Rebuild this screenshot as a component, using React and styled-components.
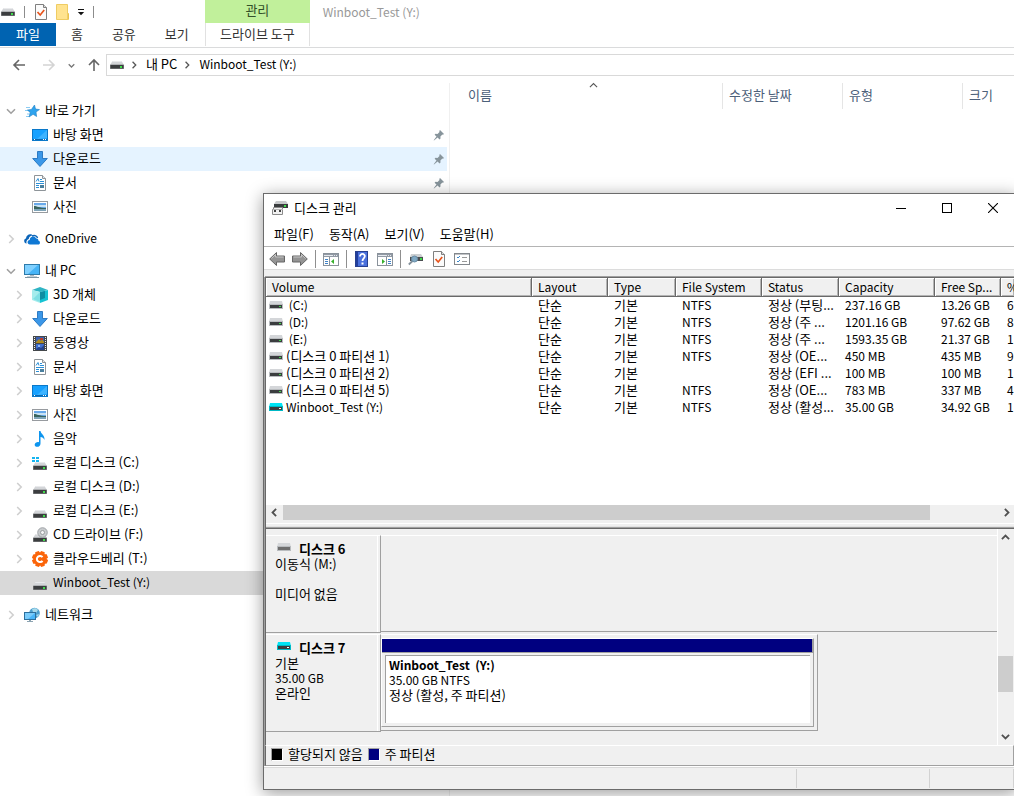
//Explorer window with the Disk Management window lying over it
import React from 'react'
import styled, { createGlobalStyle, css } from 'styled-components'

const GlobalStyle = createGlobalStyle`
  * {
    box-sizing: border-box;
  }
  body {
    margin: 0;
    background: #fff;
    color: #000;
    font-family: "Noto Sans CJK KR", "Noto Sans", sans-serif;
    font-size: 13px;
    line-height: 16px;
    overflow: hidden;
  }
  button {
    font: inherit;
    color: inherit;
    background: none;
    border: none;
    padding: 0;
    cursor: default;
  }
  a {
    color: inherit;
    text-decoration: none;
  }
  svg {
    display: block;
    flex: none;
  }
`

/* ---------- Icons ---------- */

const Icon = ({ w = 16, h = 16, children }) => (
  <svg width={w} height={h} viewBox={`0 0 ${w} ${h}`} aria-hidden="true">{children}</svg>
)

const DriveShape = () => (
  <>
    <path d="M3.5 7h9L15 11H1z" fill="#d3d5d8" />
    <path d="M3.5 7h9l.6 1H2.9z" fill="#e9eaec" />
    <rect x="1" y="10.5" width="14" height="4.5" rx=".6" fill="#8b8d8f" />
    <rect x="1.5" y="11" width="13" height="3.5" fill="#3b3d3f" />
    <rect x="11" y="12" width="2" height="2" fill="#3fdc4a" />
  </>
)
const DriveIcon = () => <Icon><DriveShape /></Icon>

//Same drive without the empty space above it, for the bars
const BarDriveIcon = () => <Icon h={8}><g transform="translate(0 -7)"><DriveShape /></g></Icon>

const SystemDriveIcon = () => (
  <Icon>
    <g fill="#14b4f0">
      <rect x="0" y="2" width="3" height="2" /><rect x="4" y="2" width="3" height="2" />
      <rect x="0" y="5" width="3" height="2" /><rect x="4" y="5" width="3" height="2" />
    </g>
    <DriveShape />
  </Icon>
)

const CdDriveIcon = () => (
  <Icon>
    <DriveShape />
    <circle cx="10.5" cy="5.5" r="4.8" fill="#c9ccce" stroke="#92979a" strokeWidth=".8" />
    <circle cx="10.5" cy="5.5" r="2" fill="#f4f4f4" stroke="#8c8f92" strokeWidth=".8" />
  </Icon>
)

const StarIcon = () => (
  <Icon>
    <path d="M2 4.5h4M1 7.500h4M3 11h3M2 13.500h3" stroke="#8ccbf2" strokeWidth="1" />
    <path d="M10.500 2l1 4 4 .6-3.500 2.400.6 4.500-3.500-2.200L5 14l1.300-4.300L3.500 7l3.900-.5z" fill="#2ea3ee" stroke="#1f7fc4" strokeWidth=".6" />
  </Icon>
)

const DesktopIcon = () => (
  <Icon>
    <rect x=".5" y="2.500" width="15" height="11" fill="#17a1ff" stroke="#0a78c9" />
    <path d="M15 3v8L5 12z" fill="#3db3ff" />
    <path d="M1 12.500h14" stroke="#0b68b0" />
    <path d="M2 12.500h1M11 12.500h1M13 12.500h1" stroke="#fff" />
  </Icon>
)

const DownloadIcon = () => (
  <Icon>
    <path d="M5.500.5h5v7h4.800L8 15.500.7 7.500h4.800z" fill="#3b97e8" stroke="#2373bd" strokeWidth=".9" />
  </Icon>
)

const DocumentIcon = () => (
  <Icon>
    <path d="M2.500.5h8l3 3v12h-11z" fill="#fff" stroke="#8e9499" />
    <path d="M10.500.5v3h3" fill="#e4e6e8" stroke="#8e9499" />
    <path d="M4 6.500l2-3 1 3M8 4.500h2M8 6.500h4M4 8.500h8M4 10.500h3M4 12.500h3" fill="none" stroke="#2b8fd6" />
    <rect x="8" y="10" width="4" height="3" fill="#4a7f9e" />
  </Icon>
)

const PictureIcon = () => (
  <Icon>
    <rect x=".5" y="2.500" width="15" height="11" fill="#fff" stroke="#979b9f" />
    <rect x="2" y="4" width="12" height="8" fill="#69a9ea" />
    <rect x="2" y="6" width="12" height="2" fill="#c8e2f4" />
    <path d="M2 7c3 0 5 2 12 2v1H2z" fill="#39645e" />
    <rect x="2" y="10" width="12" height="2" fill="#7fa4b8" />
  </Icon>
)

const OneDriveIcon = () => (
  <Icon>
    <path d="M2.600 12.500C-.6 12-.4 8 2 7.500 2 4 6.500 1.700 9 4.500 6 4.500 4.800 6.500 4.800 8 2.800 8.500 2 10.800 2.600 12.500z" fill="#0b64b8" />
    <path d="M6 13.500c-3.200 0-3.200-4.300-.3-4.500C5.700 5 10.800 4 12.200 7.600 14 7.400 14.500 9 14.200 9.600c2.400.4 2.300 3.900 0 3.900z" fill="#0f78d4" />
    <path d="M8 5c3-1 5 0 5.500 2" stroke="#0b64b8" strokeWidth="1.500" fill="none" />
  </Icon>
)

const PcIcon = () => (
  <Icon>
    <rect x=".5" y="1.500" width="15" height="10" fill="#46b4f7" stroke="#2d7bab" />
    <path d="M1 2h13L4 11H1z" fill="#7fd0ff" />
    <path d="M6 12h4v1.500H6z" fill="#a9b6bf" />
    <path d="M1 14.500h14" stroke="#7d95a3" />
    <path d="M3 13.500h10" stroke="#c4d0d7" />
  </Icon>
)

const CubeIcon = () => (
  <Icon>
    <path d="M0 3l8-3 8 3-8 2z" fill="#2fb4c4" />
    <path d="M0 3l8 2v11l-8-3z" fill="#a5ecec" />
    <path d="M16 3L8 5v11l8-3z" fill="#16c3d3" />
    <path d="M8 5L1 12l7 3z" fill="#7fdfe4" />
    <path d="M8 5l5-1v7l-5 2z" fill="#0e8ea3" />
  </Icon>
)

const VideoIcon = () => (
  <Icon>
    <rect x="1" y="1" width="14" height="15" fill="#44484b" />
    <rect x="4" y="2" width="8" height="6" fill="#3c61b0" />
    <rect x="4" y="9" width="8" height="6" fill="#3f6fd0" />
    <path d="M4 7l3-3 2 2 1-2 2 3v1H4z" fill="#b08a1e" />
    <rect x="8" y="3" width="3" height="2" fill="#bc3c26" />
    <path d="M4 14l3-2 2 1 3-3v5H4z" fill="#24438b" />
    <rect x="6" y="10" width="2" height="2" fill="#8fb6f0" />
    <path d="M2.500 2v14M13.500 2v14" stroke="#f0f0f0" strokeWidth="1" strokeDasharray="1 1" />
  </Icon>
)

const MusicIcon = () => (
  <Icon>
    <path d="M7 0h1.500c.3 3 4.500 4 4 9-.8-2-2.300-2.800-4-3v6.500C8.500 15 6.500 16 4.800 15.800 2.500 15.500 2 13 3.800 11.700 5 10.900 6.300 11 7 11.200z" fill="#0e95ee" />
  </Icon>
)

const CloudberryIcon = () => (
  <Icon>
    <g fill="#fb650a">
      <circle cx="8" cy="8" r="6.800" />
      {[22, 67, 112, 157, 202, 247, 292, 337].map((a) => (
        <rect key={a} x="5.800" y="0" width="4.400" height="4" rx="1" transform={`rotate(${a} 8 8)`} />
      ))}
    </g>
    <path d="M10.500 6.200A3.100 3.100 0 1 0 10.500 9.800" fill="none" stroke="#fff" strokeWidth="2" />
  </Icon>
)

const NetworkIcon = () => (
  <Icon>
    <circle cx="10.500" cy="6" r="5.300" fill="#4b9fce" />
    <path d="M8 2c2-1.500 5-1 6 1l-2 3-3-1zM12 8l3-1-1 3z" fill="#a7d9ea" />
    <rect x=".5" y="5.500" width="11" height="7" fill="#48b6fa" stroke="#2c6f9c" />
    <path d="M1 6h10l-7 6H1z" fill="#7accfb" />
    <path d="M3 14.500h6M5 13.500h2" stroke="#8ba3b1" />
  </Icon>
)

const CheckPageIcon = () => (
  <Icon>
    <path d="M2.500.5h8l3 3v12h-11z" fill="#fbfbfb" stroke="#7f7f7f" />
    <path d="M10.500.5v3h3" fill="#ddd" stroke="#7f7f7f" />
    <path d="M4.500 8l2.700 3 4-5" fill="none" stroke="#e8541c" strokeWidth="1.700" />
  </Icon>
)

const FolderIcon = () => (
  <Icon>
    <path d="M1.500.5h11v9h1v6h-12z" fill="#ffe38f" stroke="#efcc63" />
    <path d="M13 9.500v5.500" stroke="#e3b93d" />
  </Icon>
)

const DiskManagerIcon = () => (
  <Icon>
    <path d="M4 1h10l2 3H2z" fill="#c6c8ca" />
    <rect x="2" y="4" width="14" height="4" fill="#3a3c3e" />
    <rect x="12" y="5" width="2" height="2" fill="#3fdc4a" />
    <path d="M1.500 7.500h9v7H.5v-5h1z" fill="#f2f2f2" stroke="#8a8a8a" />
    <path d="M1 9.500h10" stroke="#b5b5b5" />
    <rect x="2" y="10" width="2" height="2" fill="#444" />
    <rect x="7" y="10" width="2" height="2" fill="#444" />
  </Icon>
)

const BigArrowIcon = ({ flip }) => (
  <Icon>
    <g transform={flip ? 'translate(16 0) scale(-1 1)' : undefined}>
      <path d="M.7 8L7.500 1.500v3.500h8v6h-8v3.500z" fill="#949494" stroke="#666" />
      <path d="M2.500 7.500L6.500 3.500v2.500h8" stroke="#c4c4c4" fill="none" />
    </g>
  </Icon>
)

const ConsoleIcon = ({ flip }) => (
  <Icon>
    <rect x=".5" y="2.500" width="15" height="12" fill="#fff" stroke="#8a929b" />
    <rect x="1" y="3" width="14" height="3" fill="#929aa5" />
    <path d="M1 4.500h9M11 4.500h1M13 4.500h1" stroke="#e6eaee" />
    <g transform={flip ? 'translate(16 0) scale(-1 1)' : undefined}>
      <path d="M6.500 6v8" stroke="#8a929b" />
      <path d="M2 8.500h3M2 10.500h3M2 12.500h3" stroke="#3f83c8" />
      <path d="M11 8v5L8 10.500z" fill="#37b02c" />
    </g>
  </Icon>
)

const HelpIcon = () => (
  <Icon>
    <rect x="1.500" y=".5" width="12" height="15" fill="#4a70dc" stroke="#27408f" />
    <path d="M2 1h2v14H2z" fill="#223f9d" />
    <path d="M6 5.500c0-3.500 5-3.200 4.800-.2C10.700 7.500 8.500 7.300 8.500 10" fill="none" stroke="#fff" strokeWidth="1.800" />
    <rect x="7.500" y="11.500" width="2" height="2" fill="#fff" />
  </Icon>
)

const RescanIcon = () => (
  <Icon>
    <path d="M3 3h10l2 3H2z" fill="#cdd0d2" />
    <rect x="2" y="6" width="13" height="4" fill="#4a4d50" />
    <rect x="12" y="7" width="2" height="2" fill="#3fdc4a" />
    <path d="M4.500 10L.8 13.500" stroke="#84909a" strokeWidth="1.800" />
    <circle cx="6.500" cy="8" r="3" fill="#7fa9c4" stroke="#6a8ca5" />
  </Icon>
)

const ListIcon = () => (
  <Icon>
    <rect x=".5" y="2.500" width="15" height="11" fill="#fff" stroke="#83888d" />
    <path d="M1 3h14" stroke="#83888d" />
    <path d="M3 6l1 1 2-2M3 10l1 1 2-2" fill="none" stroke="#3a86c8" />
    <path d="M8 6.500h5M8 10.500h5" stroke="#999" />
  </Icon>
)

//Small flat drive used in the volume list and in the disk labels
const MiniDriveIcon = ({ active, empty }) => (
  <Icon w={14} h={8}>
    <path d="M1 0h12l1 4H0z" fill={active ? '#00e4f5' : '#d4d6d9'} />
    <rect y="3" width="14" height="5" fill={active ? '#00b9c6' : '#b9bcbf'} />
    <rect x="1" y="4" width="12" height="3" fill={empty ? '#6e6e6e' : '#3b3d3f'} />
    {!empty && <rect x="10" y="5" width="2" height="1" fill={active ? '#fff' : '#3fdc4a'} />}
  </Icon>
)

const PinIcon = () => (
  <Icon w={12} h={12}>
    <path d="M7 1l4 4-1 .8-.6-.2-2 2 .1 2L6.500 10.500 4.600 8.600 1 11.500.7 11.200 3.500 7.500 1.600 5.700l.9-.9 2 .1 2-2-.2-.9z" fill="#87949b" />
  </Icon>
)

const Chevron = ({ dir = 'right', size = 10, color = '#c0c0c0', weight = 1.6 }) => {
  const turn = { right: 0, down: 90, left: 180, up: 270 }[dir]
  return (
    <svg width={size} height={size} viewBox="0 0 10 10" aria-hidden="true">
      <path d="M3.200 1L7.200 5l-4 4" fill="none" stroke={color} strokeWidth={weight} transform={`rotate(${turn} 5 5)`} />
    </svg>
  )
}

/* ---------- Explorer ---------- */

//Text without Hangul is set one size smaller
const Latin = styled.span`
  font-size: 12px;
`
const hangul = /[\uac00-\ud7a3]/
const label = (text) => (hangul.test(text) ? text : <Latin>{text}</Latin>)

const Desktop = styled.div`
  position: relative;
  display: flex;
  flex-direction: column;
  min-height: 100vh;
  overflow: hidden;
`

//Two rows: title bar over ribbon tabs, the drive tab stands under its green group
const Ribbon = styled.header`
  display: grid;
  grid-template-columns: 205px auto 1fr;
  grid-template-rows: 23px 24px;
  border-bottom: 1px solid #dadbdc;
`

const QuickAccess = styled.div`
  display: flex;
  align-items: center;
  gap: 6px;
`

const QuickSeparator = styled.span`
  width: 1px;
  height: 12px;
  margin: 0 2px;
  background: #8c8c8c;
`

const GroupLabel = styled.div`
  padding-bottom: 4px;
  background: #c1f09b;
  color: #33502a;
  display: flex;
  align-items: center;
  justify-content: center;
`

const ExplorerTitle = styled.h1`
  margin: 0;
  padding-left: 13px;
  font-size: 12px;
  font-weight: 400;
  line-height: 23px;
  color: #999;
`

const Tabs = styled.div`
  display: flex;
  gap: 1px;
`

const Tab = styled.button`
  height: 23px;
  padding: 0 14px 2px;
  color: #333;
  ${({ $file }) => $file && css`
    padding: 0 16px 2px;
    background: #0063b1;
    color: #fff;
  `}
  ${({ $context }) => $context && css`
    border-left: 1px solid #e1e1e1;
    border-right: 1px solid #e1e1e1;
  `}
`

const AddressRow = styled.div`
  display: flex;
  align-items: center;
  padding: 6px 0 0 12px;
`

const NavButtons = styled.div`
  display: flex;
  align-items: center;
  gap: 12px;
  width: 94px;
`

const AddressBox = styled.nav`
  flex: 1;
  display: flex;
  align-items: center;
  gap: 5px;
  height: 22px;
  padding-left: 2px;
  border: 1px solid #d9d9d9;
  border-right: none;
`

const Crumb = styled.a`
  padding: 0 1px 2px 3px;
`

const Body = styled.div`
  flex: 1;
  display: flex;
  padding-top: 7px;
`

const TreePane = styled.nav`
  width: 450px;
  padding: 16px 2px 0 0;
  border-right: 1px solid #f0f0f0;
`

const TreeGroup = styled.ul`
  list-style: none;
  margin: 0 0 8px;
  padding: 0;
`

const TreeLink = styled.a`
  display: flex;
  align-items: center;
  height: 24px;
  padding: 0 2px 0 ${({ $level }) => ($level ? 14 : 6)}px;
  background: ${({ $state }) => ({ hover: '#e5f3ff', selected: '#d9d9d9' }[$state] || 'transparent')};
`

const Twisty = styled.span`
  width: 18px;
`

const TreeText = styled.span`
  flex: 1;
  padding: 0 0 2px 5px;
`

const Files = styled.main`
  flex: 1;
`

const FileHeader = styled.div`
  display: grid;
  grid-template-columns: 273px 120px 120px 1fr;
`

const FileColumn = styled.button`
  position: relative;
  height: 26px;
  padding: 0 6px 2px;
  text-align: left;
  color: #4c607a;
  border-right: 1px solid #e5e5e5;
  &:first-child {
    padding-left: 18px;
  }
  &:last-child {
    border-right: none;
  }
`

const SortMark = styled.span`
  position: absolute;
  top: -2px;
  left: 51%;
`

/* ---------- Disk Management ---------- */

const Window = styled.section`
  position: absolute;
  top: 193px;
  left: 263px;
  right: -3px;
  background: #f0f0f0;
  border: 1px solid #6b6b6b;
  box-shadow: 0 3px 16px rgba(0, 0, 0, 0.4);
`

const TitleBar = styled.div`
  display: flex;
  align-items: center;
  height: 28px;
  padding-left: 8px;
  background: #fff;
`

const WindowTitle = styled.h2`
  flex: 1;
  margin: 0;
  padding-left: 6px;
  font-size: 13px;
  font-weight: 400;
`

const WindowButton = styled.button`
  display: flex;
  align-items: center;
  justify-content: center;
  width: 46px;
  height: 28px;
`

const MenuBar = styled.div`
  display: flex;
  gap: 15px;
  height: 25px;
  padding: 0 10px;
  background: #fff;
  border-bottom: 1px solid #b4b4b4;
`

const Toolbar = styled.div`
  display: flex;
  align-items: center;
  gap: 7px;
  padding: 4px 5px 2px;
  background: #fff;
  border-bottom: 1px solid #dcdcdc;
`

const ToolSeparator = styled.span`
  width: 1px;
  height: 18px;
  margin: -1px 0;
  background: #8f8f8f;
`

const Panes = styled.div`
  margin: 6px 2px 0 0;
  border-left: 1px solid #a0a0a0;
`

const VolumePane = styled.div`
  border-top: 1px solid #696969;
  border-left: 1px solid #696969;
  box-shadow: 0 -1px #a0a0a0;
  margin-top: 7px;
`

const VolumeArea = styled.div`
  height: 227px;
  background: #fff;
`

const VolumeTable = styled.table`
  width: 100%;
  table-layout: fixed;
  border-collapse: separate;
  border-spacing: 0;
  white-space: nowrap;

  th {
    height: 19px;
    padding: 0 0 0 6px;
    text-align: left;
    font-weight: 400;
    line-height: 16px;
    background: #f0f0f0;
    border-right: 1px solid #696969;
    border-bottom: 1px solid #696969;
    box-shadow: inset 1px 1px #fff, inset -1px -1px #b4b4b4;
  }
  td {
    height: 17px;
    padding: 0 0 1px 6px;
    line-height: 16px;
  }
  td:first-child {
    padding-left: 3px;
  }
  th:last-child {
    border-right: none;
  }
`

const VolumeName = styled.span`
  display: flex;
  align-items: center;
  gap: 3px;
  height: 16px;
  white-space: pre;
`

const HScroll = styled.div`
  display: flex;
  height: 15px;
  background: #f0f0f0;
`

const ScrollButton = styled.button`
  display: flex;
  align-items: center;
  justify-content: center;
  width: ${({ $wide }) => ($wide ? 17 : 15)}px;
  height: 17px;
  max-height: 100%;
`

const HTrack = styled.div`
  flex: 1;
  padding-right: 69px;
`

const Thumb = styled.div`
  height: ${({ $h }) => $h || '100%'};
  background: #cdcdcd;
`

const Splitter = styled.div`
  height: 9px;
  padding-top: 3px;
  border-bottom: 1px solid #696969;
  box-shadow: inset 0 -1px #a0a0a0;
  &::before {
    content: "";
    display: block;
    height: 2px;
    border-top: 1px solid #fff;
    border-bottom: 1px solid #e3e3e3;
  }
`

const DiskPane = styled.div`
  display: flex;
  border-left: 1px solid #696969;
`

const Disks = styled.div`
  flex: 1;
  padding: 6px 0 13px;
  display: flex;
  flex-direction: column;
  gap: 1px;
`

const DiskRow = styled.div`
  display: flex;
  align-items: flex-start;
  height: 98px;
`

const DiskLabel = styled.div`
  width: 115px;
  height: 98px;
  padding: 4px 9px;
  border: 1px solid #a0a0a0;
  border-top-color: #fff;
  border-left: none;
  box-shadow: inset -2px 0 #f0f0f0, inset -3px 0 #fff;
  line-height: 15px;
`

const DiskName = styled.div`
  display: flex;
  align-items: center;
  gap: 8px;
  height: 16px;
  padding-left: 2px;
  font-weight: 700;
  svg {
    margin-bottom: 2px;
  }
`

const DiskLine = styled.div`
  height: 15px;
  line-height: 15px;
`

const DiskSpace = styled.div`
  flex: 1;
  height: 97px;
  max-width: ${({ $filled }) => ($filled ? '437px' : 'none')};
  padding: 3px 3px 3px 0;
  border-top: 1px solid #fff;
  border-bottom: 1px solid #a0a0a0;
  border-right: ${({ $filled }) => ($filled ? '1px solid #a0a0a0' : 'none')};
`

const Partition = styled.button`
  display: flex;
  flex-direction: column;
  width: 100%;
  height: 89px;
  text-align: left;
  border: 1px solid #a0a0a0;
  border-top-color: #fff;
  border-left-color: #fff;
`

const PartitionBar = styled.span`
  height: 14px;
  width: 100%;
  background: #000080;
  border-right: 1px solid #a0a0a0;
  border-bottom: 1px solid #a0a0a0;
`

const PartitionInfo = styled.span`
  flex: 1;
  margin: 2px 3px 3px;
  padding: 1px 3px;
  width: calc(100% - 6px);
  background: #fff;
  border-top: 1px solid #a0a0a0;
  border-left: 1px solid #a0a0a0;
  line-height: 15px;
  white-space: pre;
`

const PartitionLine = styled.span`
  display: block;
  height: 15px;
  font-weight: ${({ $bold }) => ($bold ? 700 : 400)};
`

const VScroll = styled.div`
  display: flex;
  flex-direction: column;
  width: 17px;
  padding-right: 1px;
  border-left: 1px solid #fff;
`

const VTrack = styled.div`
  flex: 1;
  padding-top: 110px;
`

const Legend = styled.div`
  display: flex;
  align-items: center;
  gap: 5px;
  height: 21px;
  padding: 0 5px 3px;
  border: 1px solid #a0a0a0;
  border-top-color: #fff;
  border-left-color: #696969;
`

const Swatch = styled.span`
  width: 12px;
  height: 13px;
  background: ${({ $color }) => $color};
  border: 1px solid #a0a0a0;
  border-right-color: #fff;
  border-bottom-color: #fff;
`

const StatusBar = styled.footer`
  display: grid;
  grid-template-columns: 1fr 133px 84px;
  height: 23px;
  margin: 0 2px 0 0;
  padding: 2px 0 1px;
  border-top: 1px solid #fff;
  box-shadow: inset 0 1px #dadada;
`

const StatusCell = styled.div`
  border-right: 1px solid #d2d2d2;
`

/* ---------- Data ---------- */

const quick = [
  { label: '바탕 화면', icon: <DesktopIcon />, pinned: true },
  { label: '다운로드', icon: <DownloadIcon />, pinned: true, state: 'hover' },
  { label: '문서', icon: <DocumentIcon />, pinned: true },
  { label: '사진', icon: <PictureIcon /> },
]

const computer = [
  { label: '3D 개체', icon: <CubeIcon />, twisty: 'right' },
  { label: '다운로드', icon: <DownloadIcon />, twisty: 'right' },
  { label: '동영상', icon: <VideoIcon />, twisty: 'right' },
  { label: '문서', icon: <DocumentIcon />, twisty: 'right' },
  { label: '바탕 화면', icon: <DesktopIcon />, twisty: 'right' },
  { label: '사진', icon: <PictureIcon />, twisty: 'right' },
  { label: '음악', icon: <MusicIcon />, twisty: 'right' },
  { label: '로컬 디스크 (C:)', icon: <SystemDriveIcon />, twisty: 'right' },
  { label: '로컬 디스크 (D:)', icon: <DriveIcon />, twisty: 'right' },
  { label: '로컬 디스크 (E:)', icon: <DriveIcon />, twisty: 'right' },
  { label: 'CD 드라이브 (F:)', icon: <CdDriveIcon />, twisty: 'right' },
  { label: '클라우드베리 (T:)', icon: <CloudberryIcon />, twisty: 'right' },
  { label: 'Winboot_Test (Y:)', icon: <DriveIcon />, state: 'selected' },
]

const tree = [
  { label: '바로 가기', icon: <StarIcon />, twisty: 'down', items: quick },
  { label: 'OneDrive', icon: <OneDriveIcon />, twisty: 'right', items: [] },
  { label: '내 PC', icon: <PcIcon />, twisty: 'down', items: computer },
  { label: '네트워크', icon: <NetworkIcon />, twisty: 'right', items: [] },
]

const columns = [
  ['Volume', 266], ['Layout', 76], ['Type', 68], ['File System', 86],
  ['Status', 77], ['Capacity', 96], ['Free Sp...', 66], ['%', null],
]

const volumes = [
  [' (C:)', '단순', '기본', 'NTFS', '정상 (부팅...', '237.16 GB', '13.26 GB', '6'],
  [' (D:)', '단순', '기본', 'NTFS', '정상 (주 ...', '1201.16 GB', '97.62 GB', '8'],
  [' (E:)', '단순', '기본', 'NTFS', '정상 (주 ...', '1593.35 GB', '21.37 GB', '1'],
  ['(디스크 0 파티션 1)', '단순', '기본', 'NTFS', '정상 (OE...', '450 MB', '435 MB', '9'],
  ['(디스크 0 파티션 2)', '단순', '기본', '', '정상 (EFI ...', '100 MB', '100 MB', '1'],
  ['(디스크 0 파티션 5)', '단순', '기본', 'NTFS', '정상 (OE...', '783 MB', '337 MB', '4'],
  ['Winboot_Test (Y:)', '단순', '기본', 'NTFS', '정상 (활성...', '35.00 GB', '34.92 GB', '1'],
]

const TreeRow = ({ item, level }) => (
  <TreeLink href="#" $level={level} $state={item.state}>
    <Twisty>
      {item.twisty && <Chevron dir={item.twisty} color={item.twisty === 'down' ? '#a0a0a0' : '#cfcfcf'} />}
    </Twisty>
    {item.icon}
    <TreeText>{label(item.label)}</TreeText>
    {item.pinned && <PinIcon />}
  </TreeLink>
)

const Explorer = () => (
  <>
    <Ribbon>
      <QuickAccess>
        <BarDriveIcon />
        <QuickSeparator />
        <button aria-label="속성"><CheckPageIcon /></button>
        <button aria-label="새 폴더"><FolderIcon /></button>
        <button aria-label="사용자 지정">
          <Icon w={8} h={8}><path d="M1 1.500h6" stroke="#111" /><path d="M.8 4h6.400L4 7.300z" fill="#111" /></Icon>
        </button>
        <QuickSeparator />
      </QuickAccess>
      <GroupLabel>관리</GroupLabel>
      <ExplorerTitle>Winboot_Test (Y:)</ExplorerTitle>
      <Tabs>
        <Tab $file>파일</Tab>
        <Tab>홈</Tab>
        <Tab>공유</Tab>
        <Tab>보기</Tab>
      </Tabs>
      <Tab $context>드라이브 도구</Tab>
    </Ribbon>

    <AddressRow>
      <NavButtons>
        <button aria-label="뒤로">
          <Icon w={14} h={14}><path d="M13 7H2M7 2L2 7l5 5" fill="none" stroke="#666" strokeWidth="1.600" /></Icon>
        </button>
        <button aria-label="앞으로">
          <Icon w={18} h={14}><path d="M5 7h11M11 2l5 5-5 5" fill="none" stroke="#d4d4d4" strokeWidth="1.600" /></Icon>
        </button>
        <button aria-label="최근 위치"><Chevron dir="down" size={7} color="#777" weight={1.8} /></button>
        <button aria-label="위로">
          <Icon w={14} h={14}><path d="M7 13V2M2 7l5-5 5 5" fill="none" stroke="#666" strokeWidth="1.600" /></Icon>
        </button>
      </NavButtons>
      <AddressBox>
        <BarDriveIcon />
        <Chevron size={8} color="#555" />
        <Crumb href="#">내 PC</Crumb>
        <Chevron size={8} color="#555" />
        <Crumb href="#">{label('Winboot_Test (Y:)')}</Crumb>
      </AddressBox>
    </AddressRow>

    <Body>
      <TreePane>
        {tree.map((group) => (
          <TreeGroup key={group.label}>
            <li><TreeRow item={group} level={0} /></li>
            {group.items.map((item) => (
              <li key={item.label}><TreeRow item={item} level={1} /></li>
            ))}
          </TreeGroup>
        ))}
      </TreePane>
      <Files>
        <FileHeader>
          <FileColumn>이름<SortMark><Chevron dir="up" size={9} color="#555" weight={1.2} /></SortMark></FileColumn>
          <FileColumn>수정한 날짜</FileColumn>
          <FileColumn>유형</FileColumn>
          <FileColumn>크기</FileColumn>
        </FileHeader>
      </Files>
    </Body>
  </>
)

const DiskManagement = () => (
  <Window>
    <TitleBar>
      <DiskManagerIcon />
      <WindowTitle>디스크 관리</WindowTitle>
      <WindowButton aria-label="최소화"><Icon w={10} h={10}><path d="M0 5.500h10" stroke="#000" /></Icon></WindowButton>
      <WindowButton aria-label="최대화"><Icon w={10} h={10}><rect x=".5" y=".5" width="9" height="9" fill="none" stroke="#000" /></Icon></WindowButton>
      <WindowButton aria-label="닫기"><Icon w={10} h={10}><path d="M0 0l10 10M10 0L0 10" stroke="#000" strokeWidth="1.100" /></Icon></WindowButton>
    </TitleBar>
    <MenuBar>
      <button>파일(F)</button>
      <button>동작(A)</button>
      <button>보기(V)</button>
      <button>도움말(H)</button>
    </MenuBar>
    <Toolbar>
      <button aria-label="뒤로"><BigArrowIcon /></button>
      <button aria-label="앞으로"><BigArrowIcon flip /></button>
      <ToolSeparator />
      <button aria-label="콘솔 트리"><ConsoleIcon /></button>
      <ToolSeparator />
      <button aria-label="도움말"><HelpIcon /></button>
      <button aria-label="작업 창"><ConsoleIcon flip /></button>
      <ToolSeparator />
      <button aria-label="다시 검사"><RescanIcon /></button>
      <button aria-label="속성"><CheckPageIcon /></button>
      <button aria-label="설정"><ListIcon /></button>
    </Toolbar>

    <Panes>
      <VolumePane>
        <VolumeArea>
          <VolumeTable>
            <colgroup>
              {columns.map(([name, width]) => <col key={name} width={width || undefined} />)}
            </colgroup>
            <thead>
              <tr>{columns.map(([name]) => <th key={name}>{label(name)}</th>)}</tr>
            </thead>
            <tbody>
              {volumes.map((row) => (
                <tr key={row[0]}>
                  <td><VolumeName><MiniDriveIcon active={row[0].startsWith('Win')} />{label(row[0])}</VolumeName></td>
                  {row.slice(1).map((cell, i) => <td key={i}>{label(cell)}</td>)}
                </tr>
              ))}
            </tbody>
          </VolumeTable>
        </VolumeArea>
        <HScroll>
          <ScrollButton $wide aria-label="왼쪽"><Chevron dir="left" size={9} color="#505050" weight={2} /></ScrollButton>
          <HTrack><Thumb /></HTrack>
          <ScrollButton aria-label="오른쪽"><Chevron size={9} color="#505050" weight={2} /></ScrollButton>
        </HScroll>
        <Splitter />
      </VolumePane>

      <DiskPane>
        <Disks>
          <DiskRow>
            <DiskLabel>
              <DiskName><MiniDriveIcon empty />디스크 6</DiskName>
              <DiskLine>이동식 (M:)</DiskLine>
              <DiskLine />
              <DiskLine>미디어 없음</DiskLine>
            </DiskLabel>
            <DiskSpace />
          </DiskRow>
          <DiskRow>
            <DiskLabel>
              <DiskName><MiniDriveIcon active />디스크 7</DiskName>
              <DiskLine>기본</DiskLine>
              <DiskLine>{label('35.00 GB')}</DiskLine>
              <DiskLine>온라인</DiskLine>
            </DiskLabel>
            <DiskSpace $filled>
              <Partition>
                <PartitionBar />
                <PartitionInfo>
                  <PartitionLine $bold>{label('Winboot_Test  (Y:)')}</PartitionLine>
                  <PartitionLine>{label('35.00 GB NTFS')}</PartitionLine>
                  <PartitionLine>정상 (활성, 주 파티션)</PartitionLine>
                </PartitionInfo>
              </Partition>
            </DiskSpace>
          </DiskRow>
        </Disks>
        <VScroll>
          <ScrollButton aria-label="위로"><Chevron dir="up" size={9} color="#505050" weight={2} /></ScrollButton>
          <VTrack><Thumb $h="36px" /></VTrack>
          <ScrollButton aria-label="아래로"><Chevron dir="down" size={9} color="#505050" weight={2} /></ScrollButton>
        </VScroll>
      </DiskPane>
      <Legend>
        <Swatch $color="#000" />할당되지 않음
        <Swatch $color="#000080" />주 파티션
      </Legend>
    </Panes>
    <StatusBar>
      <StatusCell />
      <StatusCell />
      <StatusCell />
    </StatusBar>
  </Window>
)

const App = () => (
  <Desktop>
    <GlobalStyle />
    <Explorer />
    <DiskManagement />
  </Desktop>
)

export default App
